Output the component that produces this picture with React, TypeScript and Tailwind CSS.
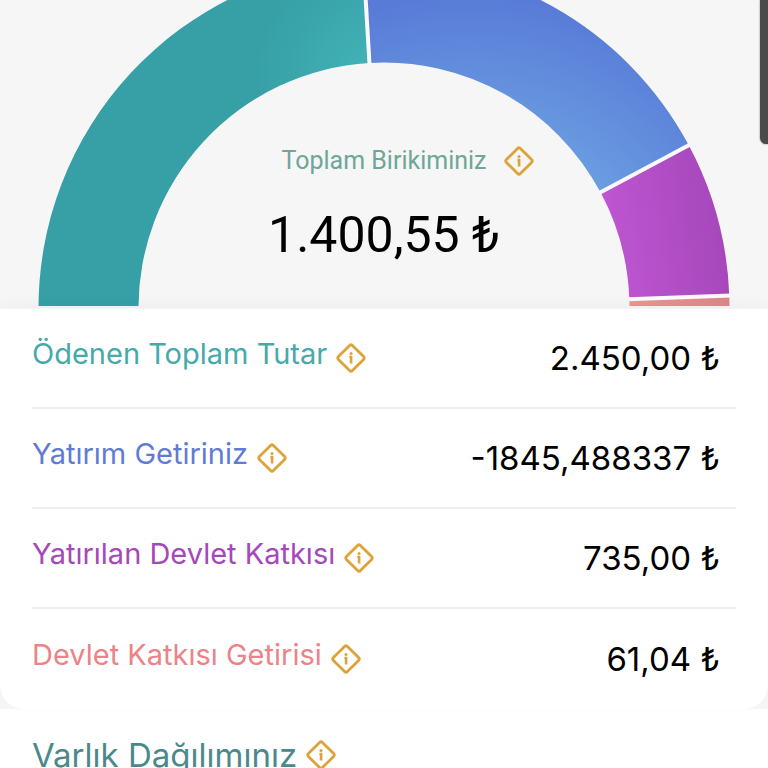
const rows = [
  { label: 'Ödenen Toplam Tutar', value: '2.450,00 ₺', color: 'text-[#45aaa9]' },
  { label: 'Yatırım Getiriniz', value: '-1845,488337 ₺', color: 'text-[#5f7bd6]' },
  { label: 'Yatırılan Devlet Katkısı', value: '735,00 ₺', color: 'text-[#a549ba]' },
  { label: 'Devlet Katkısı Getirisi', value: '61,04 ₺', color: 'text-[#ec8388]' },
];

const CX = 384;
const CY = 308;
const OUTER = 345.5;
const INNER = 245.5;

// angles in degrees, counter-clockwise from the right
function slice(from: number, to: number) {
  const point = (r: number, deg: number) => {
    const a = (deg * Math.PI) / 180;
    return `${CX + r * Math.cos(a)} ${CY - r * Math.sin(a)}`;
  };
  return `M${point(OUTER, from)} A${OUTER} ${OUTER} 0 0 0 ${point(OUTER, to)} L${point(INNER, to)} A${INNER} ${INNER} 0 0 1 ${point(INNER, from)} Z`;
}

function InfoButton({ label }: { label: string }) {
  return (
    <button type="button" aria-label={label} className="block size-8 shrink-0 text-[#dea338]">
      <svg viewBox="0 0 32 32" fill="none" className="size-8">
        <rect x="6.1" y="6.1" width="19.8" height="19.8" rx="2" transform="rotate(45 16 16)" stroke="currentColor" strokeWidth="2.8" />
        <circle cx="16" cy="11.4" r="1.5" fill="currentColor" />
        <path d="M14.4 15H16.1V21.4" stroke="currentColor" strokeWidth="2.6" />
      </svg>
    </button>
  );
}

function SavingsChart() {
  return (
    <svg viewBox="0 0 768 306" className="block w-full" aria-hidden="true">
      <defs>
        <radialGradient id="paid" gradientUnits="userSpaceOnUse" cx="376" cy="74" r="120">
          <stop offset="0" stopColor="#41b3b6" />
          <stop offset="0.2" stopColor="#40b0b4" />
          <stop offset="1" stopColor="#36a0a6" />
        </radialGradient>
        <radialGradient id="returns" gradientUnits="userSpaceOnUse" cx="470" cy="320" r="350">
          <stop offset="0.5" stopColor="#6c9fe2" />
          <stop offset="0.93" stopColor="#587bd7" />
        </radialGradient>
        <linearGradient id="state" gradientUnits="userSpaceOnUse" x1="610" y1="240" x2="728" y2="220">
          <stop offset="0" stopColor="#be55d2" />
          <stop offset="1" stopColor="#a447b9" />
        </linearGradient>
        <linearGradient id="stateReturns">
          <stop offset="0" stopColor="#e99692" />
          <stop offset="1" stopColor="#db888a" />
        </linearGradient>
      </defs>
      <g stroke="#fbf9fe" strokeWidth="4">
        <path d={slice(93.4, 181)} fill="url(#paid)" stroke="none" />
        <path d={slice(28.1, 93.4)} fill="url(#returns)" stroke="none" />
        <path d={slice(2.05, 28.1)} fill="url(#state)" stroke="none" />
        <path d={slice(-1, 2.05)} fill="url(#stateReturns)" stroke="none" />
        {[93.4, 28.1, 2.05].map((deg) => (
          <line key={deg} x1={CX + INNER - 1} x2={CX + OUTER + 1} y1={CY} y2={CY} transform={`rotate(${-deg} ${CX} ${CY})`} />
        ))}
      </g>
    </svg>
  );
}

export default function App() {
  return (
    <main className="relative h-screen overflow-x-hidden overflow-y-auto bg-[#f6f6f6] font-['Inter',sans-serif] [scrollbar-width:none]">
      <section className="grid pb-0.5">
        <div className="col-start-1 row-start-1">
          <SavingsChart />
        </div>
        <div className="z-10 col-start-1 row-start-1 self-end pb-10 font-['Roboto',sans-serif]">
          <div className="grid grid-cols-[1fr_auto_1fr] items-center gap-4">
            <h1 className="col-start-2 text-[25px] leading-8 text-[#6ea697]">Toplam Birikiminiz</h1>
            <InfoButton label="Toplam Birikiminiz bilgisi" />
          </div>
          <p className="mt-7 text-center text-[50px] leading-[61px] text-black">1.400,55 ₺</p>
        </div>
      </section>

      <section className="relative rounded-b-3xl border-t border-[#f1f5f5] bg-white px-8 shadow-[0_-4px_16px_rgba(0,0,0,0.03)]">
        <dl>
          {rows.map((row) => (
            <div key={row.label} className="flex h-[100px] items-center justify-between border-b-2 border-[#ebeff0] pr-4 last:border-b-0">
              <dt className={`flex items-center gap-2 text-[29px] leading-9 ${row.color}`}>
                <span className="pb-2">{row.label}</span>
                <InfoButton label={`${row.label} bilgisi`} />
              </dt>
              <dd className="text-[33px] leading-10 text-black">{row.value}</dd>
            </div>
          ))}
        </dl>
      </section>

      <section className="flex items-center gap-2 bg-white px-8 pt-[30px] pb-6">
        <h2 className="text-[33px] leading-8 text-[#4a898b]">Varlık Dağılımınız</h2>
        <InfoButton label="Varlık Dağılımınız bilgisi" />
      </section>

      <div className="absolute top-0 right-0 h-36 w-2 rounded-bl-md bg-[#4a4a4a] shadow-[0_0_2px_#777]" />
    </main>
  );
}
